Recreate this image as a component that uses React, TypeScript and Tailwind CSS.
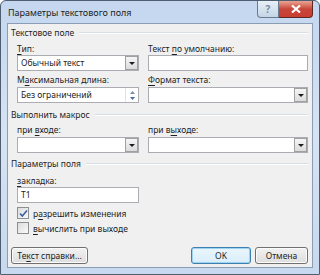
import React from "react";

function Acc({ text, at }: { text: string; at: number }) {
  return (
    <>
      {text.slice(0, at)}
      <span className="underline underline-offset-[1.5px]">{text[at]}</span>
      {text.slice(at + 1)}
    </>
  );
}

function Label({ children }: { children: React.ReactNode }) {
  return <div className="h-[13px] leading-[13px] whitespace-nowrap">{children}</div>;
}

function GroupHeader({ title }: { title: string }) {
  return (
    <div className="flex items-center gap-[5px] h-[14px] leading-[14px]">
      <span className="whitespace-nowrap">{title}</span>
      <div className="flex-1 border-t border-[#d5dfe5] border-b-white border-b h-0" />
    </div>
  );
}

function Arrow() {
  return (
    <svg width="6" height="3" viewBox="0 0 6 3">
      <path d="M0 0h6L3 3z" fill="#1c1c1c" />
    </svg>
  );
}

function Combo({ value = "" }: { value?: string }) {
  return (
    <div className="flex h-[16px] border border-[#abadb3] bg-white">
      <div className="flex-1 pl-[3px] leading-[14px] whitespace-nowrap">{value}</div>
      <div className="w-[13px] h-[14px] flex items-center justify-center border border-[#a0a0a0] bg-gradient-to-b from-[#f5f5f5] to-[#dcdcdc]">
        <Arrow />
      </div>
    </div>
  );
}

function TextBox({ value = "" }: { value?: string }) {
  return (
    <div className="h-[16px] border border-[#abadb3] bg-white pl-[3px] leading-[14px] whitespace-nowrap">{value}</div>
  );
}

function Spin({ value }: { value: string }) {
  return (
    <div className="flex h-[16px] border border-[#abadb3] bg-white">
      <div className="flex-1 pl-[3px] leading-[14px] whitespace-nowrap">{value}</div>
      <div className="w-[13px] flex flex-col items-center justify-center gap-[3px] border-l border-[#e3e3e3]">
        <svg width="5" height="3" viewBox="0 0 5 3">
          <path d="M0 3h5L2.5 0z" fill="#7a8fae" />
        </svg>
        <svg width="5" height="3" viewBox="0 0 5 3">
          <path d="M0 0h5L2.5 3z" fill="#4a6aa8" />
        </svg>
      </div>
    </div>
  );
}

function Check({ checked, children }: { checked?: boolean; children: React.ReactNode }) {
  return (
    <div className="flex items-center gap-[4px] h-[14px]">
      <div className="w-[12px] h-[12px] border border-[#8e8f8f] bg-gradient-to-br from-[#dcdcdc] to-[#fafafa] flex items-center justify-center">
        {checked && (
          <svg width="9" height="9" viewBox="0 0 9 9">
            <path d="M1 4.5l2.3 2.5L8 1.5" stroke="#3d5ea3" strokeWidth="1.6" fill="none" />
          </svg>
        )}
      </div>
      <span className="leading-[13px] whitespace-nowrap">{children}</span>
    </div>
  );
}

function Btn({ children, w, primary }: { children: React.ReactNode; w: string; primary?: boolean }) {
  return (
    <div
      className={`${w} h-[17px] rounded-[3px] border flex items-center justify-center leading-[13px] ${
        primary
          ? "border-[#3c7fb1] bg-gradient-to-b from-[#eaf6fd] to-[#d9eefa] shadow-[inset_0_0_0_1px_#9fd2f0]"
          : "border-[#707070] bg-gradient-to-b from-[#f2f2f2] to-[#dddddd] shadow-[inset_0_0_0_1px_#fcfcfc]"
      }`}
    >
      <span className="whitespace-nowrap">{children}</span>
    </div>
  );
}

export default function App() {
  return (
    <div
      className="w-[320px] h-[275px] flex flex-col border border-[#4e5d70] rounded-t-[6px] bg-gradient-to-b from-[#c4d7ef] via-[#d6e3f2] to-[#c7d9ee] text-[8.5px] text-[#1e1e1e]"
      style={{ fontFamily: '"Noto Sans", "Liberation Sans", sans-serif' }}
    >
      {/* title bar */}
      <div className="h-[21px] flex items-start pl-[7px] pr-[6px]">
        <div className="flex-1 pt-[5px] leading-[14px] text-[9px] text-[#1c1c1c]">Параметры текстового поля</div>
        <div className="flex">
          <div className="w-[22px] h-[17px] border border-[#6b7b8f] border-t-0 rounded-bl-[4px] bg-gradient-to-b from-[#e8f0f8] to-[#c4d4e6] flex items-center justify-center text-[10px] font-bold text-[#7a8aa0]">
            ?
          </div>
          <div className="w-[34px] h-[17px] border border-[#5c2a24] border-t-0 border-l-0 rounded-br-[4px] bg-gradient-to-b from-[#e7a493] via-[#c8463a] to-[#c93e30] flex items-center justify-center">
            <svg width="10" height="8" viewBox="0 0 10 8">
              <path d="M1 0.5l8 7M9 0.5l-8 7" stroke="#fff" strokeWidth="2.2" />
            </svg>
          </div>
        </div>
      </div>

      {/* client area */}
      <div className="flex-1 mx-[6px] mb-[6px] mt-[1px] border border-[#8a9db4] bg-[#f0f0f0] pl-[3px] pr-[4px] pt-[2px] flex flex-col">
        <GroupHeader title="Текстовое поле" />
        <div className="grid grid-cols-[122px_160px] gap-x-[9px] pl-[6px] mt-[2px]">
          <div className="flex flex-col">
            <Label>
              <Acc text="Тип:" at={0} />
            </Label>
            <Combo value="Обычный текст" />
            <div className="mt-[2px]">
              <Label>
                <Acc text="Максимальная длина:" at={1} />
              </Label>
            </div>
            <div className="mt-[1px]">
              <Spin value="Без ограничений" />
            </div>
          </div>
          <div className="flex flex-col">
            <Label>
              Текст <Acc text="по умолчанию:" at={0} />
            </Label>
            <TextBox />
            <div className="mt-[2px]">
              <Label>
                <Acc text="Формат текста:" at={0} />
              </Label>
            </div>
            <div className="mt-[1px]">
              <Combo />
            </div>
          </div>
        </div>

        <div className="mt-[5px]">
          <GroupHeader title="Выполнить макрос" />
        </div>
        <div className="grid grid-cols-[122px_160px] gap-x-[9px] pl-[6px] mt-[1px]">
          <div className="flex flex-col">
            <Label>
              при <Acc text="входе:" at={0} />
            </Label>
            <div className="mt-[1px]">
              <Combo />
            </div>
          </div>
          <div className="flex flex-col">
            <Label>
              при <Acc text="выходе:" at={1} />
            </Label>
            <div className="mt-[1px]">
              <Combo />
            </div>
          </div>
        </div>

        <div className="mt-[4px]">
          <GroupHeader title="Параметры поля" />
        </div>
        <div className="flex flex-col pl-[6px] mt-[3px] w-[128px]">
          <Label>
            <Acc text="закладка:" at={0} />
          </Label>
          <TextBox value="T1" />
        </div>
        <div className="flex flex-col pl-[6px] mt-[3px] gap-[1px]">
          <Check checked>
            р<Acc text="азрешить изменения" at={0} />
          </Check>
          <Check>
            <Acc text="вычислить при выходе" at={0} />
          </Check>
        </div>

        <div className="flex items-center mt-[12px]">
          <Btn w="w-[77px]">
            Те<Acc text="кст справки..." at={0} />
          </Btn>
          <div className="flex-1" />
          <Btn w="w-[60px]" primary>
            OK
          </Btn>
          <div className="w-[4px]" />
          <Btn w="w-[53px]">Отмена</Btn>
        </div>
      </div>
    </div>
  );
}
